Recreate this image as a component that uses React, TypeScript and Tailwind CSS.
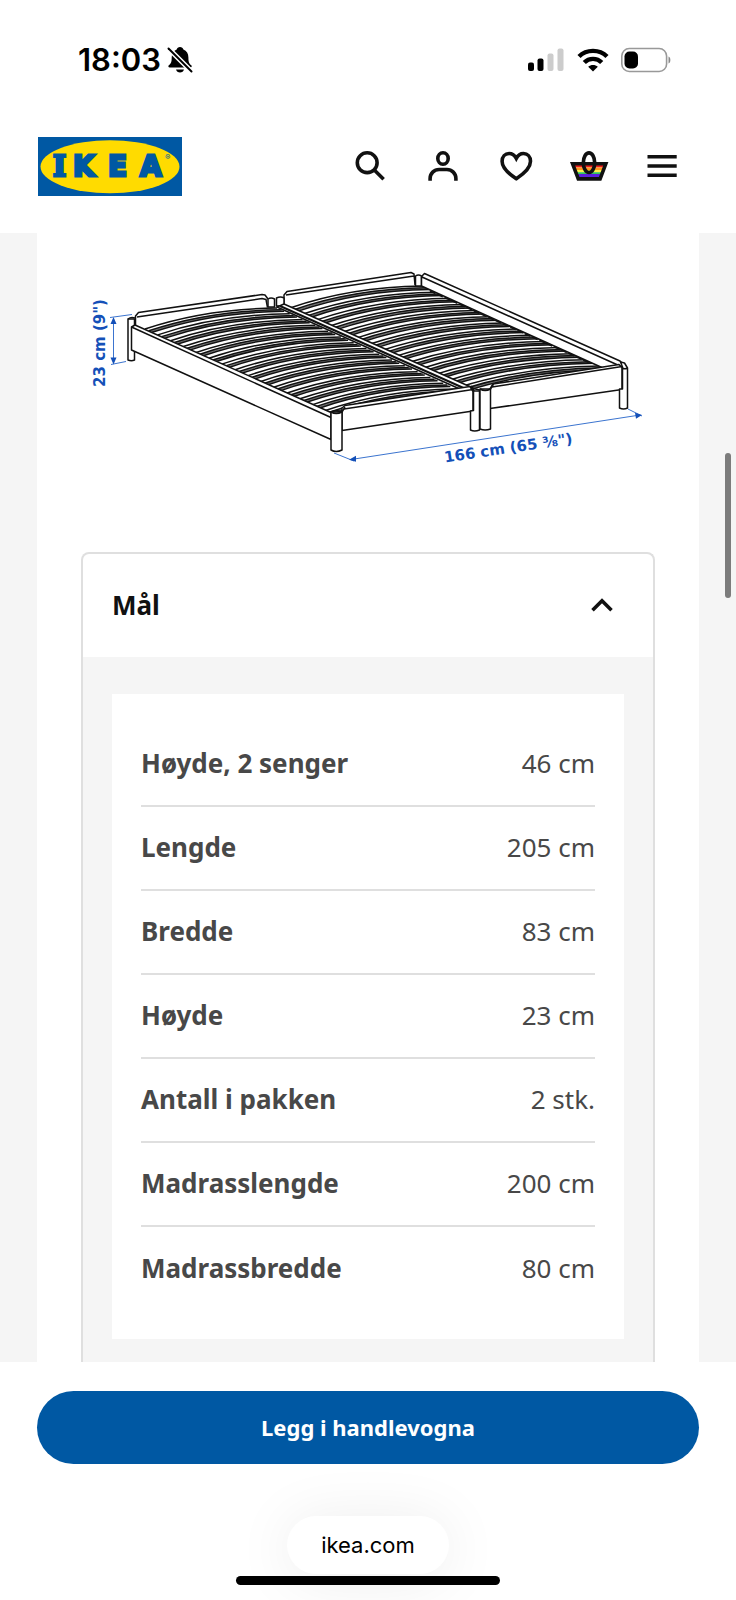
import clsx from 'clsx';
import React, { useState } from 'react';

interface Measurement {
  label: string;
  value: string;
}

const measurements: Measurement[] = [
  { label: 'Høyde, 2 senger', value: '46 cm' },
  { label: 'Lengde', value: '205 cm' },
  { label: 'Bredde', value: '83 cm' },
  { label: 'Høyde', value: '23 cm' },
  { label: 'Antall i pakken', value: '2 stk.' },
  { label: 'Madrasslengde', value: '200 cm' },
  { label: 'Madrassbredde', value: '80 cm' },
];

const StatusBar = () => (
  <div className="flex h-[120px] items-center justify-between pl-[78px] pr-[64px] font-['Inter',sans-serif]">
    <div className="flex items-center gap-1.5">
      <span className="text-[31px] leading-[40px] font-semibold">18:03</span>
      <svg width="26" height="28" viewBox="0 0 26 28" aria-hidden="true">
        <path
          d="M13 1c1.8 0 3 1 3.4 2.4 3.3 1.3 5 4.2 5 8 0 4.6.7 5.9 2.9 7.9.8.8.4 2.2-.9 2.2H2.7c-1.3 0-1.8-1.4-.9-2.2C4 17.3 4.7 16 4.7 11.4c0-3.8 1.7-6.7 5-8C10 2 11.3 1 13 1z"
          fill="#000"
        />
        <path d="M9 23.5h8c-.5 1.8-2 3-4 3s-3.5-1.2-4-3z" fill="#000" />
        <path d="M0 1l25 25" stroke="#fff" strokeWidth="5" />
        <path d="M1.5 2.5l23 23" stroke="#000" strokeWidth="2" strokeLinecap="round" />
      </svg>
    </div>

    <div className="flex items-center gap-3">
      <svg width="37" height="24" viewBox="0 0 37 24" aria-hidden="true">
        <rect x="0" y="14.5" width="6" height="8.5" rx="2" />
        <rect x="9.5" y="10.5" width="6" height="12.5" rx="2" />
        <rect x="19.5" y="5.5" width="6" height="17.5" rx="2" fill="#ccc" />
        <rect x="29.5" y="0.5" width="6" height="22.5" rx="2" fill="#ccc" />
      </svg>
      <svg width="32" height="24" viewBox="0 0 32 24" aria-hidden="true" fill="none" stroke="#000" strokeWidth="4.4">
        <path d="M2 8.5C9.5 1 22.5 1 30 8.5" />
        <path d="M7.3 14.5C12 9.7 20 9.7 24.7 14.5" />
        <path d="M16 23.5l-4.8-4.7c2.6-2.4 7-2.4 9.6 0z" fill="#000" stroke="none" />
      </svg>
      <svg width="51" height="26" viewBox="0 0 51 26" aria-hidden="true">
        <rect x="0.8" y="1.5" width="44.8" height="23" rx="7.5" fill="none" stroke="#999" strokeWidth="1.6" />
        <rect x="3.5" y="4.5" width="13.5" height="17" rx="5" />
        <path d="M47.5 9.5c2.5.8 2.5 6.2 0 7z" fill="#888" />
      </svg>
    </div>
  </div>
);

const Logo = () => (
  <a href="#" aria-label="IKEA" className="block">
    <svg width="144" height="59" viewBox="0 0 144 59">
      <rect width="144" height="59" fill="#0058a3" />
      <ellipse cx="72" cy="29.7" rx="69.5" ry="26.5" fill="#ffdb00" />
      <g
        fill="#0058a3"
        stroke="#0058a3"
        strokeWidth="2.8"
        fontFamily="'DejaVu Sans', sans-serif"
        fontWeight="700"
        fontSize="28"
      >
        <text x="15" y="39" fontFamily="'DejaVu Serif', serif">
          I
        </text>
        <text x="35" y="39">K</text>
        <text x="70" y="39">E</text>
        <text x="102" y="39">A</text>
      </g>
      <text x="127" y="23" fontSize="8" fill="#0058a3" fontFamily="Inter, sans-serif">
        ®
      </text>
    </svg>
  </a>
);

interface IconButtonProps {
  label: string;
  children: React.ReactNode;
}

const IconButton = ({ label, children }: IconButtonProps) => (
  <button type="button" aria-label={label} className="size-11">
    <svg
      width="44"
      height="44"
      viewBox="0 0 44 44"
      fill="none"
      stroke="#111"
      strokeWidth="3.6"
    >
      {children}
    </svg>
  </button>
);

const Header = () => (
  <header className="flex h-[113px] items-start justify-between pt-[17px] pl-[38px] pr-[52px]">
    <Logo />
    <nav className="mt-[7px] flex gap-[29px]">
      <IconButton label="Søk">
        <circle cx="19.2" cy="18.7" r="9.9" />
        <path d="M26.3 26l9.3 9.3" />
      </IconButton>
      <IconButton label="Profil">
        <ellipse cx="22" cy="14.5" rx="5.2" ry="5.7" />
        <path d="M9.1 36.7v-2.2c0-5 4-9 9-9h7.8c5 0 9 4 9 9v2.2" />
      </IconButton>
      <IconButton label="Favoritter">
        <path d="M22.3 34.7C15 30 8.1 24.5 8.1 17.3c0-4.6 3-7.8 7-7.8 3 0 5.6 1.8 7.2 4.8 1.6-3 4.2-4.8 7.2-4.8 4 0 7 3.2 7 7.8 0 7.2-6.9 12.7-14.2 17.4z" />
      </IconButton>
      <IconButton label="Handlevogn">
        <clipPath id="basket">
          <path d="M5.6 19.8h33.2l-5.7 15.1H11.3z" />
        </clipPath>
        <g clipPath="url(#basket)" stroke="none">
          <rect y="18" width="44" height="5.5" fill="#f01c1c" />
          <rect y="23.5" width="44" height="2.5" fill="#ff9a1f" />
          <rect y="26" width="44" height="2.2" fill="#fff04a" />
          <rect y="28.2" width="44" height="1.8" fill="#35c759" />
          <rect y="30" width="44" height="6" fill="#5b1fe0" />
        </g>
        <path d="M5.6 19.8h33.2l-5.7 15.1H11.3z" />
        <ellipse cx="22" cy="18.7" rx="5.7" ry="9.8" />
      </IconButton>
      <IconButton label="Meny">
        <path d="M7.5 12.7h29.2M7.5 22h29.2M7.5 31.2h29.2" />
      </IconButton>
    </nav>
  </header>
);

interface SlatsProps {
  from: number[];
  to: number[];
  end: number[];
  endTo: number[];
  count: number;
}

// Bent slats run from the outer rail up to the far rail
const Slats = ({ from, to, end, endTo, count }: SlatsProps) => {
  const curve = (step: number) => {
    const t = step / (count - 1);
    const x1 = from[0] + (end[0] - from[0]) * t;
    const y1 = from[1] + (end[1] - from[1]) * t;
    const x2 = to[0] + (endTo[0] - to[0]) * t;
    const y2 = to[1] + (endTo[1] - to[1]) * t;
    return `M${x1} ${y1}Q${x1 + (x2 - x1) * 0.45} ${y2 + 1} ${x2} ${y2}`;
  };

  return (
    <>
      {Array.from({ length: count }, (_, i) => (
        <g key={i}>
          <path d={curve(i + 0.42)} stroke="#777" strokeWidth="2" />
          <path d={curve(i)} />
          <path d={curve(i + 0.3)} />
          <path d={curve(i + 0.56)} />
        </g>
      ))}
    </>
  );
};

const BedDrawing = () => (
  <svg
    viewBox="37 233 662 319"
    className="block w-full"
    role="img"
    aria-label="Stablebar seng med mål"
    fill="none"
    stroke="#111"
    strokeWidth="1.5"
    strokeLinejoin="round"
  >
    <Slats from={[145, 329]} to={[277, 308]} end={[324, 411]} endTo={[456, 389]} count={15} />
    <Slats from={[290, 308]} to={[423, 286]} end={[460, 387]} endTo={[600, 366]} count={14} />

    {/* back panels */}
    <path d="M135.5 327V316l3-3.5L262 294.5l3 .5 3 4M137 317l125-18.5 4 1 1.5 8" />
    <path d="M284 304v-9l3-3.5L411 272.5l3 1.5 1 11M286 295l128-19" />
    <path d="M268 299q3-2 6.5 0v8H268zM276.5 298q4-2 7.5 0v8h-7.5z" fill="#fff" />
    <path d="M415.5 276q3-2 6 0v10h-6z" fill="#fff" />

    {/* right side rail */}
    <path d="M421.5 286V277l3-3.5L620 361l4.5 5V368L603 368z" fill="#fff" stroke="none" />
    <path d="M421.5 286v-9.5l3-3L620 361l4.5 5M422 277L620 366M421.5 286L603 368" />
    <path d="M430 291L590 363" strokeWidth="1.6" strokeDasharray="6 2" />

    {/* centre rail */}
    <path d="M277 307l185 83h12l-1-2L284 304z" fill="#fff" />
    <path d="M280 306l188 84" strokeWidth="2" />

    {/* left leg and side rail */}
    <path d="M128 319h6.5v41q-3 1.5-6.5 0z" fill="#fff" />
    <path d="M128 319q3-2.5 7-1" />
    <path d="M131.5 327l3.5-2 196 87.5V439.5L131.5 350z" fill="#fff" />
    <path d="M131.5 327L331 417.5" />

    {/* front rails */}
    <path d="M342 408l3-2.5 125-19 3 5V411l-131 19.5z" fill="#fff" />
    <path d="M344 409l129-19.5" />
    <path d="M490 389l3-5 126-19.5 3 3v22l-132 19z" fill="#fff" />
    <path d="M492 387l130-20.5" />

    {/* legs */}
    <path d="M331 412v38q5 3 11 0v-38z" fill="#fff" />
    <path d="M331 412q5 3 11 0l3-5M331 412q5-3 11 0" />
    <path d="M470.5 411v19q4 2 9 0v-40l-6-1.5v22z" fill="#fff" />
    <path d="M480 389v40q5 2 10.5 0v-40z" fill="#fff" />
    <path d="M480 389q5 3 10.5 0l3-5M471 386l3 5h6" />
    <path d="M619.5 389v19q4 2 8 0V368l-3-5-4-1 2 5v22z" fill="#fff" />
    <path d="M622 368q3 1.5 5.5 0" />

    {/* dimension lines */}
    <g stroke="#3b74cf" strokeWidth="1">
      <path d="M110 317.5l22-3M111 364.5l15-3M113.5 321v40" />
      <path d="M334 453l20 8M351 459.5L640 415M628 409l14 7" />
    </g>
    <g fill="#1450b8" stroke="none">
      <path d="M113.5 317l3 7h-6zM113.5 364.5l3-7h-6zM349 459.8l7-4v6zM642 415l-7-2.2 1 6z" />
      <g fontFamily="'DejaVu Sans', sans-serif" fontWeight="700" fontSize="15" textAnchor="middle">
        <text transform="translate(105 343) rotate(-90)">23 cm (9")</text>
        <text transform="translate(509 453) rotate(-8.5)">166 cm (65 ⅜")</text>
      </g>
    </g>
  </svg>
);

const MeasurementsCard = () => {
  const [isOpen, setIsOpen] = useState(true);

  return (
    <section className="mx-11 rounded-t-lg border-2 border-b-0 border-[#dfdfdf]">
      <h2>
        <button
          type="button"
          aria-expanded={isOpen}
          onClick={() => setIsOpen(!isOpen)}
          className="flex h-[103px] w-full items-center justify-between pb-0.5 pl-[29px] pr-[40px] text-[26px] leading-[36px] font-bold text-[#111]"
        >
          Mål
          <svg
            width="22"
            height="14"
            viewBox="0 0 22 14"
            fill="none"
            stroke="#111"
            strokeWidth="3.6"
            className={clsx(!isOpen && 'rotate-180')}
          >
            <path d="M1.5 12.3L11 2.8l9.5 9.5" />
          </svg>
        </button>
      </h2>

      {isOpen && (
        <div className="bg-[#f5f5f5] px-[29px] pt-[37px] pb-[23px]">
          <div className="bg-white px-[29px] pt-7 pb-[29px]">
            <table className="w-full text-[26px] leading-[36px] text-[#484848]">
              <tbody>
                {measurements.map(({ label, value }) => (
                  <tr
                    key={label}
                    className="h-[84px] border-b-2 border-[#dfdfdf] last:border-b-0"
                  >
                    <th scope="row" className="pb-0.5 text-left font-bold">
                      {label}
                    </th>
                    <td className="pb-0.5 text-right">{value}</td>
                  </tr>
                ))}
              </tbody>
            </table>
          </div>
        </div>
      )}
    </section>
  );
};

const BottomBar = () => (
  <footer className="flex flex-col items-center px-[37px] pt-[29px] pb-[15px]">
    <button
      type="button"
      className="h-[73px] w-full rounded-full bg-[#0058a3] pb-0.5 text-[22px] leading-[32px] font-bold text-white"
    >
      Legg i handlevogna
    </button>
    <a
      href="#"
      className="mt-[52px] flex h-[58px] items-center rounded-full bg-white px-[34px] font-['Inter',sans-serif] text-[22px] text-black shadow-[0_4px_60px_rgba(0,0,0,0.08)]"
    >
      ikea.com
    </a>
    <div className="mt-0.5 h-[9px] w-[264px] rounded-full bg-black" />
  </footer>
);

export default function App() {
  return (
    <div className="relative overflow-hidden bg-white font-['Noto_Sans',sans-serif]">
      <StatusBar />
      <Header />
      <main className="bg-[#f5f5f5] px-[37px]">
        <div className="bg-white">
          <BedDrawing />
          <MeasurementsCard />
        </div>
      </main>
      <BottomBar />

      {/* scroll indicator */}
      <div className="absolute top-[453px] right-[5px] h-[145px] w-1.5 rounded-full bg-[#7c7c7c]" />
    </div>
  );
}
